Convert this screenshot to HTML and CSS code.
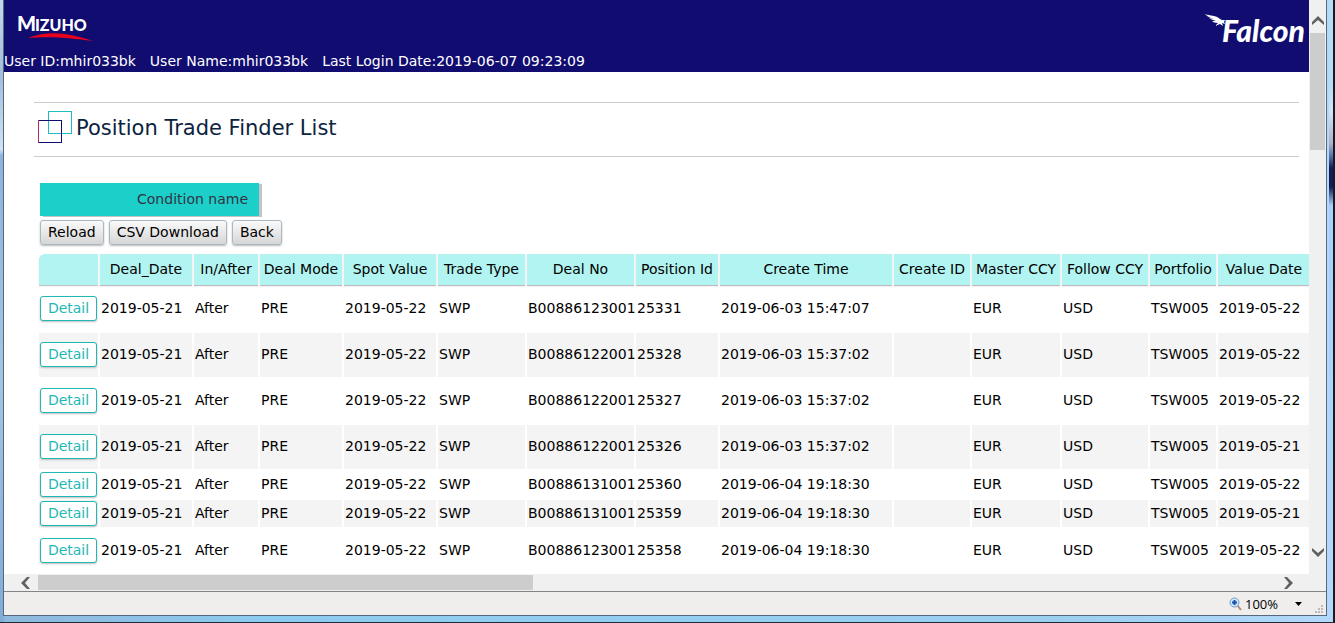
FILE: index.html
```html
<!DOCTYPE html>
<html lang="en">
<head>
<meta charset="utf-8">
<title>Position Trade Finder List</title>
<link rel="stylesheet" href="styles.css">
</head>
<body>
<div class="window">
  <div class="viewport">
    <main class="page">
      <header class="banner">
        <div class="brands">
          <svg class="mizuho" width="84" height="34" viewBox="0 0 84 34" role="img" aria-label="Mizuho">
            <text x="3" y="22" class="mizuho-text" font-size="20">M</text>
            <text x="21" y="22" class="mizuho-text" font-size="16">IZUHO</text>
            <path d="M14 29C36 21 54 24 79 32C56 29 38 27 14 29Z" fill="#e8001c"/>
          </svg>
          <svg class="falcon" width="108" height="38" viewBox="0 0 108 38" role="img" aria-label="Falcon">
            <path d="M4 5C9 7 15 6 19 10L21 11L24 11L23 13L24 15L21 14L22 17L19 15L14 17L17 14C14 14 12 13 11 12L15 12C12 11 9 10 8 9L13 10C10 9 7 8 6 7L11 8C8 7 5 7 4 5Z" fill="#fff"/>
            <text x="21" y="33" class="falcon-text" font-size="30">Falcon</text>
          </svg>
        </div>
        <div class="session">
          <span>User ID:mhir033bk</span>
          <span>User Name:mhir033bk</span>
          <span>Last Login Date:2019-06-07 09:23:09</span>
        </div>
      </header>
      <section class="heading">
        <svg width="36" height="34" viewBox="0 0 36 34" aria-hidden="true">
          <rect x="10.500" y="0.500" width="23" height="22" fill="none" stroke="#1cbcc0"/>
          <rect x="0.500" y="9.500" width="23" height="22" fill="none" stroke="#100c70"/>
          <path d="M0.500 9V32" stroke="#a03070"/>
        </svg>
        <h1>Position Trade Finder List</h1>
      </section>
      <section class="content">
        <div class="condition">Condition name</div>
        <div class="actions">
          <button type="button" class="action">Reload</button>
          <button type="button" class="action">CSV Download</button>
          <button type="button" class="action">Back</button>
        </div>
        <table class="trades">
          <colgroup>
            <col class="w-detail"><col class="w-date"><col class="w-after"><col class="w-short"><col class="w-date"><col class="w-type"><col class="w-deal"><col class="w-short"><col class="w-time"><col class="w-id"><col class="w-master"><col class="w-follow"><col class="w-port"><col class="w-date">
          </colgroup>
          <thead>
            <tr><th></th><th>Deal_Date</th><th>In/After</th><th>Deal Mode</th><th>Spot Value</th><th>Trade Type</th><th>Deal No</th><th>Position Id</th><th>Create Time</th><th>Create ID</th><th>Master CCY</th><th>Follow CCY</th><th>Portfolio</th><th>Value Date</th></tr>
          </thead>
          <tbody>
            <tr><td><button type="button" class="detail">Detail</button></td><td>2019-05-21</td><td>After</td><td>PRE</td><td>2019-05-22</td><td>SWP</td><td>B00886123001</td><td>25331</td><td>2019-06-03 15:47:07</td><td></td><td>EUR</td><td>USD</td><td>TSW005</td><td>2019-05-22</td></tr>
            <tr><td><button type="button" class="detail">Detail</button></td><td>2019-05-21</td><td>After</td><td>PRE</td><td>2019-05-22</td><td>SWP</td><td>B00886122001</td><td>25328</td><td>2019-06-03 15:37:02</td><td></td><td>EUR</td><td>USD</td><td>TSW005</td><td>2019-05-22</td></tr>
            <tr><td><button type="button" class="detail">Detail</button></td><td>2019-05-21</td><td>After</td><td>PRE</td><td>2019-05-22</td><td>SWP</td><td>B00886122001</td><td>25327</td><td>2019-06-03 15:37:02</td><td></td><td>EUR</td><td>USD</td><td>TSW005</td><td>2019-05-22</td></tr>
            <tr><td><button type="button" class="detail">Detail</button></td><td>2019-05-21</td><td>After</td><td>PRE</td><td>2019-05-22</td><td>SWP</td><td>B00886122001</td><td>25326</td><td>2019-06-03 15:37:02</td><td></td><td>EUR</td><td>USD</td><td>TSW005</td><td>2019-05-21</td></tr>
            <tr class="compact"><td><button type="button" class="detail">Detail</button></td><td>2019-05-21</td><td>After</td><td>PRE</td><td>2019-05-22</td><td>SWP</td><td>B00886131001</td><td>25360</td><td>2019-06-04 19:18:30</td><td></td><td>EUR</td><td>USD</td><td>TSW005</td><td>2019-05-22</td></tr>
            <tr class="compact"><td><button type="button" class="detail">Detail</button></td><td>2019-05-21</td><td>After</td><td>PRE</td><td>2019-05-22</td><td>SWP</td><td>B00886131001</td><td>25359</td><td>2019-06-04 19:18:30</td><td></td><td>EUR</td><td>USD</td><td>TSW005</td><td>2019-05-21</td></tr>
            <tr><td><button type="button" class="detail">Detail</button></td><td>2019-05-21</td><td>After</td><td>PRE</td><td>2019-05-22</td><td>SWP</td><td>B00886123001</td><td>25358</td><td>2019-06-04 19:18:30</td><td></td><td>EUR</td><td>USD</td><td>TSW005</td><td>2019-05-22</td></tr>
          </tbody>
        </table>
      </section>
    </main>
    <div class="vscroll">
      <button type="button" class="arrow" aria-label="Scroll up"><svg width="12" height="9" viewBox="0 0 12 9"><path d="M0 6L6 0L12 6V9L6 4L0 9Z"/></svg></button>
      <div class="vtrack"><div class="vthumb"></div></div>
      <button type="button" class="arrow" aria-label="Scroll down"><svg width="12" height="9" viewBox="0 0 12 9"><path d="M0 3L6 9L12 3V0L6 5L0 0Z"/></svg></button>
    </div>
  </div>
  <div class="hscroll">
    <button type="button" class="arrow" aria-label="Scroll left"><svg width="9" height="12" viewBox="0 0 9 12"><path d="M6 0L0 6L6 12H9L4 6L9 0Z"/></svg></button>
    <div class="htrack"><div class="hthumb"></div></div>
    <button type="button" class="arrow" aria-label="Scroll right"><svg width="9" height="12" viewBox="0 0 9 12"><path d="M3 0L9 6L3 12H0L5 6L0 0Z"/></svg></button>
  </div>
  <footer class="status">
    <button type="button" class="zoom">
      <svg width="14" height="14" viewBox="0 0 14 14" aria-hidden="true"><path d="M8 8L12 13" stroke="#b08a70" stroke-width="2"/><circle cx="5.500" cy="5.500" r="4.500" fill="#cfe6fa" stroke="#6a9fd0"/><path d="M3 5.500H8M5.500 3V8" stroke="#1650a8" stroke-width="2"/></svg>
      <span>100%</span>
      <svg class="caret" width="7" height="4" viewBox="0 0 7 4" aria-hidden="true"><path d="M0 0H7L3.500 4Z"/></svg>
    </button>
    <svg class="grip" width="9" height="9" viewBox="0 0 9 9" aria-hidden="true"><path d="M6 0H8V2H6ZM3 3H5V5H3ZM6 3H8V5H6ZM0 6H2V8H0ZM3 6H5V8H3ZM6 6H8V8H6Z" fill="#bcb8b8"/></svg>
  </footer>
</div>
</body>
</html>
```
FILE: styles.css
```css
* { box-sizing: border-box; }
body {
  margin: 0;
  height: 100vh;
  display: flex;
  padding: 0 6px 6px 3px;
  overflow: hidden;
  background:
    linear-gradient(#b8dcf4 0 14%, #d4e4f4 18%, #b0b0c8 23%, #5a74a8 25%, #141c58 27% 30%, #a8d0f8 33%, #b4d8fa 100%) right / 6px 100% no-repeat,
    linear-gradient(#c4d8ec, #a0bedc 12%, #d0e2f4 24%, #8cb4dc 25%, #a4c4e4 60%, #80acd8 100%) left / 4px 100% no-repeat,
    linear-gradient(90deg, #8fb8dc, #8cccf0 20%, #9cd0f0 80%, #b4d8fa);
  border-right: 2px solid #141c2c;
  border-bottom: 1px solid #1c2a3c;
  font: 14px/20px "DejaVu Sans", Verdana, sans-serif;
  color: #000;
}
button { font: inherit; margin: 0; cursor: pointer; }
.window {
  flex: 1;
  min-width: 0;
  display: flex;
  flex-direction: column;
  border: 1px solid #56687c;
  border-top: 0;
  background: #fff;
}
.viewport { flex: 1; min-height: 0; display: flex; }
.page { flex: 1; min-width: 0; overflow: hidden; }
.banner { background: #100c70; color: #fff; height: 72px; display: flex; flex-direction: column; justify-content: space-between; }
.brands { display: flex; justify-content: space-between; padding: 9px 0 0 10px; }
.mizuho-text { font-family: "Lato", sans-serif; font-weight: 900; fill: #fff; }
.falcon { overflow: visible; }
.falcon-text { font-family: "Lato", sans-serif; font-weight: 900; font-style: italic; fill: #fff; }
.session { display: flex; gap: 14px; height: 21px; white-space: nowrap; }
.heading {
  display: flex;
  align-items: center;
  gap: 2px;
  margin: 30px 10px 0 30px;
  padding: 8px 4px 11px;
  border-top: 1px solid #ccc;
  border-bottom: 1px solid #ccc;
}
.heading h1 { margin: 0; font-size: 21px; line-height: 34px; font-weight: 400; color: #0c2340; }
.content { padding: 26px 0 0 33px; }
.condition {
  width: 219px;
  margin-left: 3px;
  padding: 0 11px;
  line-height: 33px;
  text-align: right;
  background: #1ccfc9;
  color: #334;
  box-shadow: 3px 1px 0 #c4c4c4;
}
.actions { display: flex; gap: 5px; padding: 4px 3px 7px; }
.action {
  height: 25px;
  padding: 0 7px;
  line-height: 23px;
  border: 1px solid #a9b9c4;
  border-radius: 3px;
  background: linear-gradient(#fafafa, #d6d6d6);
  box-shadow: 0 1px 2px #bbb;
  color: #000;
}
.trades { width: 1275px; table-layout: fixed; border-collapse: separate; border-spacing: 2px; white-space: nowrap; }
.trades th {
  height: 31px;
  padding: 0 0 2px;
  font-weight: 400;
  background: #b2f4f1;
  box-shadow: 0 1px 1px #bbb;
}
.trades th:first-child { border-top-left-radius: 6px; }
.trades td { height: 44px; padding: 0 1px 2px; }
.trades .compact td { height: 27px; }
.trades .compact td:first-child { padding-bottom: 0; }
.trades tbody tr:nth-child(even) td { background: #f4f4f4; }
.detail {
  display: block;
  width: 57px;
  height: 25px;
  padding: 0;
  line-height: 23px;
  border: 1px solid #1fb9b5;
  border-radius: 3px;
  background: #fff;
  box-shadow: 0 1px 2px #bbb;
  color: #1fb9b5;
}
.w-detail { width: 59px; }
.w-date { width: 92px; }
.w-after { width: 64px; }
.w-short { width: 82px; }
.w-type { width: 87px; }
.w-deal { width: 107px; }
.w-time { width: 172px; }
.w-id { width: 76px; }
.w-master { width: 88px; }
.w-follow { width: 86px; }
.w-port { width: 66px; }
.vscroll { width: 17px; display: flex; flex-direction: column; background: #f0f0f0; padding: 8px 1px 9px; }
.arrow { display: flex; align-items: center; justify-content: center; padding: 0; border: 0; background: none; fill: #606060; }
.vscroll .arrow { height: 25px; }
.vtrack { flex: 1; }
.vthumb { height: 23%; background: #cdcdcd; }
.hscroll { height: 17px; display: flex; background: #f0f0f0; padding: 1px 25px 1px 9px; }
.hscroll .arrow { width: 25px; }
.htrack { flex: 1; display: flex; }
.hthumb { width: 40%; background: #cdcdcd; }
.status {
  height: 24px;
  display: flex;
  align-items: center;
  justify-content: flex-end;
  border-top: 1px solid #808488;
  background: #f0eded;
}
.zoom { display: flex; align-items: center; gap: 2px; padding: 0; border: 0; background: none; font: 13px/20px "Open Sans", sans-serif; color: #000; }
.caret { margin-left: 15px; }
.grip { align-self: flex-end; margin: 0 2px 1px 13px; }
```
